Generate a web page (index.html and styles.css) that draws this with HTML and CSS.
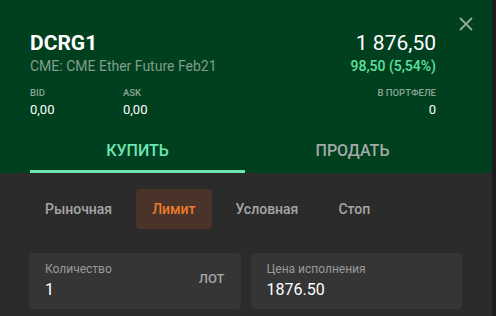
FILE: index.html
```html
<!DOCTYPE html>
<html lang="ru">
<head>
<meta charset="utf-8">
<title>DCRG1</title>
<link rel="stylesheet" href="styles.css">
</head>
<body>
<div class="panel">
  <div class="header">
    <button class="close" aria-label="Закрыть">
      <svg width="14" height="14" viewBox="0 0 14 14"><path d="M1 1L13 13M13 1L1 13" stroke="#8fa99b" stroke-width="1.8" fill="none"/></svg>
    </button>
    <div class="top">
      <div class="ident">
        <div class="ticker">DCRG1</div>
        <div class="name">CME: CME Ether Future Feb21</div>
      </div>
      <div class="quote">
        <div class="price">1 876,50</div>
        <div class="change">98,50 (5,54%)</div>
      </div>
    </div>
    <div class="stats">
      <div class="stat">
        <div class="stat-label">BID</div>
        <div class="stat-value">0,00</div>
      </div>
      <div class="stat">
        <div class="stat-label">ASK</div>
        <div class="stat-value">0,00</div>
      </div>
      <div class="stat stat-right">
        <div class="stat-label">В ПОРТФЕЛЕ</div>
        <div class="stat-value">0</div>
      </div>
    </div>
    <div class="tabs">
      <div class="tab tab-active">КУПИТЬ</div>
      <div class="tab">ПРОДАТЬ</div>
    </div>
  </div>
  <div class="body">
    <div class="types">
      <div class="type">Рыночная</div>
      <div class="type type-active">Лимит</div>
      <div class="type">Условная</div>
      <div class="type">Стоп</div>
    </div>
    <div class="fields">
      <div class="field">
        <div class="field-main">
          <div class="field-label">Количество</div>
          <div class="field-value">1</div>
        </div>
        <div class="field-unit">ЛОТ</div>
      </div>
      <div class="field">
        <div class="field-main">
          <div class="field-label">Цена исполнения</div>
          <div class="field-value">1876.50</div>
        </div>
      </div>
    </div>
  </div>
</div>
</body>
</html>
```
FILE: styles.css
```css
* { box-sizing: border-box; }
html, body { margin: 0; padding: 0; }
body {
  background: #1c1c1c;
  font-family: Roboto, "Liberation Sans", sans-serif;
  width: 496px;
  height: 316px;
  overflow: hidden;
}
.panel {
  width: 492px;
  height: 316px;
  background: #2b2b2b;
  position: relative;
}
.header {
  background: #00401f;
  padding: 31px 30px 0 30px;
}
.close {
  position: absolute;
  top: 17px;
  left: 459px;
  width: 14px;
  height: 14px;
  padding: 0;
  border: 0;
  background: none;
  display: block;
}
.close svg { display: block; }
.top {
  display: flex;
  justify-content: space-between;
  padding-right: 26px;
}
.ticker {
  color: #ffffff;
  font-size: 21px;
  font-weight: 700;
  line-height: 24px;
}
.name {
  color: #7f9e8c;
  font-size: 14px;
  line-height: 18px;
  margin-top: 2px;
}
.quote { text-align: right; }
.price {
  color: #ffffff;
  font-size: 21px;
  line-height: 24px;
}
.change {
  color: #5fe0a0;
  font-size: 14px;
  font-weight: 500;
  line-height: 18px;
  margin-top: 2px;
}
.stats {
  display: flex;
  margin-top: 12px;
  padding-right: 26px;
}
.stat { width: 93px; }
.stat-right { margin-left: auto; text-align: right; width: auto; }
.stat-label {
  color: #8aa596;
  font-size: 9.5px;
  line-height: 12px;
  font-weight: 500;
}
.stat-value {
  color: #ffffff;
  font-size: 13px;
  line-height: 16px;
  margin-top: 3px;
}
.tabs {
  display: flex;
  margin-top: 15px;
  padding-right: 2px;
}
.tab {
  flex: 1;
  text-align: center;
  color: #a3aaa6;
  font-size: 16px;
  font-weight: 500;
  line-height: 20px;
  padding: 8px 0 9px 0;
  border-bottom: 3px solid transparent;
}
.tab-active {
  color: #6ee6b4;
  border-bottom-color: #6ee6b4;
}
.body {
  padding: 16px 30px 0 29px;
}
.types {
  display: flex;
  gap: 8px;
}
.type {
  height: 40px;
  padding: 0 16px;
  display: flex;
  align-items: center;
  color: #a5a5a5;
  font-size: 14px;
  font-weight: 500;
  border-radius: 4px;
}
.type-active {
  background: #4a3429;
  color: #ef7b2a;
}
.fields {
  display: flex;
  gap: 10px;
  margin-top: 24px;
}
.field {
  flex: 1;
  height: 56px;
  background: #353535;
  border-radius: 4px;
  display: flex;
  align-items: center;
  padding: 0 16px;
}
.field-main { flex: 1; }
.field-label {
  color: #9a9a9a;
  font-size: 12px;
  line-height: 14px;
}
.field-value {
  color: #ffffff;
  font-size: 16px;
  line-height: 20px;
  margin-top: 4px;
}
.field-unit {
  color: #a5a5a5;
  font-size: 13px;
  font-weight: 500;
  margin-bottom: 6px;
}
```
